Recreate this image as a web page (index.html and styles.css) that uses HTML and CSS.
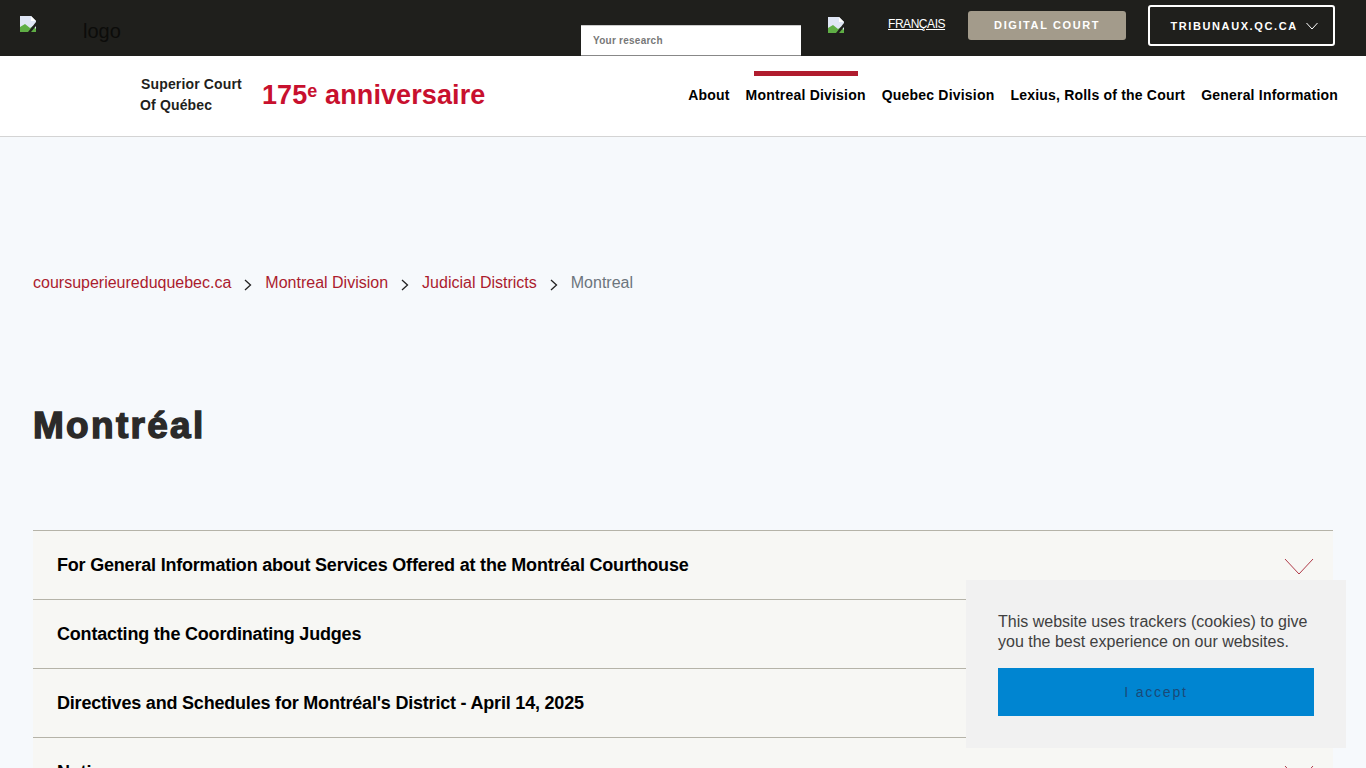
FILE: index.html
```html
<!DOCTYPE html>
<html lang="en">

<head>
    <meta charset="UTF-8">
    <meta name="viewport" content="width=device-width, initial-scale=1.0">
    <title>Montréal</title>
    <link rel="stylesheet" href="styles.css">
</head>

<body>
    <div class="top-bar">
        <div class="logo-box">
            <svg class="broken-img" width="17" height="17" viewBox="0 0 17 17">
                <path d="M0 0H11L16 5V16H0Z" fill="#dfe6f5" />
                <path d="M11 0V5H16Z" fill="#fff" />
                <path d="M0 16V11L5 8L10 12L13 10L16 13V16Z" fill="#5fae45" />
                <path d="M16 6L8 16H11L16 10Z" fill="#1f1f1c" />
            </svg>
            <span class="logo-text">logo</span>
        </div>
        <input class="search-input" type="text" placeholder="Your research">
        <svg class="broken-img search-img" width="17" height="17" viewBox="0 0 17 17">
            <path d="M0 0H11L16 5V16H0Z" fill="#dfe6f5" />
            <path d="M11 0V5H16Z" fill="#fff" />
            <path d="M0 16V11L5 8L10 12L13 10L16 13V16Z" fill="#5fae45" />
            <path d="M16 6L8 16H11L16 10Z" fill="#1f1f1c" />
        </svg>
        <a class="lang-link" href="#">FRANÇAIS</a>
        <a class="digital-btn" href="#">DIGITAL COURT</a>
        <a class="tribunaux-btn" href="#">TRIBUNAUX.QC.CA
            <svg width="12" height="8" viewBox="0 0 12 8">
                <path d="M0.5 1L6 7L11.5 1" fill="none" stroke="#fff" stroke-width="1" />
            </svg>
        </a>
    </div>

    <div class="nav-bar">
        <div class="court-name">
            <span class="court-line">Superior Court</span>
            <span class="court-line court-line-2">Of Québec</span>
        </div>
        <div class="anniversary">175<sup>e</sup> anniversaire</div>
        <ul class="main-menu">
            <li><a href="#">About</a></li>
            <li class="active"><a href="#">Montreal Division</a></li>
            <li><a href="#">Quebec Division</a></li>
            <li><a href="#">Lexius, Rolls of the Court</a></li>
            <li><a href="#">General Information</a></li>
        </ul>
    </div>

    <div class="content">
        <nav class="breadcrumb">
            <a href="#">coursuperieureduquebec.ca</a>
            <svg class="crumb-sep" width="8" height="12" viewBox="0 0 8 12"><path d="M1 1L6.5 6L1 11" fill="none" stroke="#222" stroke-width="1.3" /></svg>
            <a href="#">Montreal Division</a>
            <svg class="crumb-sep" width="8" height="12" viewBox="0 0 8 12"><path d="M1 1L6.5 6L1 11" fill="none" stroke="#222" stroke-width="1.3" /></svg>
            <a href="#">Judicial Districts</a>
            <svg class="crumb-sep" width="8" height="12" viewBox="0 0 8 12"><path d="M1 1L6.5 6L1 11" fill="none" stroke="#222" stroke-width="1.3" /></svg>
            <span class="crumb-current">Montreal</span>
        </nav>

        <h1 class="page-title">Montréal</h1>

        <div class="accordion">
            <div class="acc-row">
                <span>For General Information about Services Offered at the Montréal Courthouse</span>
                <svg class="acc-icon" width="30" height="17" viewBox="0 0 30 17"><path d="M1 1L15 16L29 1" fill="none" stroke="#b03a48" stroke-width="1" /></svg>
            </div>
            <div class="acc-row">
                <span>Contacting the Coordinating Judges</span>
                <svg class="acc-icon" width="30" height="17" viewBox="0 0 30 17"><path d="M1 1L15 16L29 1" fill="none" stroke="#b03a48" stroke-width="1" /></svg>
            </div>
            <div class="acc-row">
                <span>Directives and Schedules for Montréal's District - April 14, 2025</span>
                <svg class="acc-icon" width="30" height="17" viewBox="0 0 30 17"><path d="M1 1L15 16L29 1" fill="none" stroke="#b03a48" stroke-width="1" /></svg>
            </div>
            <div class="acc-row">
                <span>Notices</span>
                <svg class="acc-icon" width="30" height="17" viewBox="0 0 30 17"><path d="M1 1L15 16L29 1" fill="none" stroke="#b03a48" stroke-width="1" /></svg>
            </div>
        </div>
    </div>

    <div class="cookie-banner">
        <p>This website uses trackers (cookies) to give you the best experience on our websites.</p>
        <button class="cookie-btn">I accept</button>
    </div>
</body>

</html>
```

FILE: styles.css
```css
html,
body {
    margin: 0;
    height: 100%;
    overflow: hidden;
}

body {
    background-color: #f6f9fc;
    font-family: "Liberation Sans", Arial, sans-serif;
    color: #000;
}

a {
    text-decoration: none;
}

/* top dark bar */
.top-bar {
    display: flex;
    align-items: flex-start;
    height: 56px;
    background-color: #1f1f1c;
}

.logo-box {
    display: flex;
    width: 561px;
    padding: 16px 0 0 20px;
    box-sizing: content-box;
}

.broken-img {
    flex: none;
}

.logo-text {
    margin: 4px 0 0 46px;
    font-size: 20px;
    color: #0c0c0a;
}

.search-input {
    width: 220px;
    height: 31px;
    margin-top: 25px;
    padding: 0 12px;
    box-sizing: border-box;
    border: 0;
    border-top: 1px solid #ccc;
    border-bottom: 1px solid #888;
    border-radius: 0;
    background-color: #fff;
    font-family: "Liberation Sans", Arial, sans-serif;
    font-size: 10px;
    font-weight: bold;
    letter-spacing: 0.25px;
}

.search-input::placeholder {
    color: #777;
}

.search-img {
    margin: 17px 0 0 27px;
}

.lang-link {
    margin: 17px 0 0 43px;
    color: #fff;
    font-size: 12px;
    letter-spacing: -0.45px;
    text-decoration: underline;
}

.digital-btn {
    width: 158px;
    height: 29px;
    margin: 11px 0 0 23px;
    background-color: #a39b8b;
    border-radius: 3px;
    color: #fff;
    font-size: 11px;
    font-weight: bold;
    letter-spacing: 1.6px;
    line-height: 29px;
    text-align: center;
}

.tribunaux-btn {
    display: flex;
    align-items: center;
    justify-content: center;
    gap: 8px;
    width: 187px;
    height: 41px;
    margin: 5px 0 0 22px;
    padding-left: 5px;
    box-sizing: border-box;
    border: 2px solid #fff;
    border-radius: 3px;
    color: #fff;
    font-size: 11px;
    font-weight: bold;
    letter-spacing: 1.6px;
}

/* white nav */
.nav-bar {
    display: flex;
    align-items: center;
    height: 80px;
    box-sizing: content-box;
    padding-right: 28px;
    background-color: #fff;
    border-bottom: 1px solid #d4d4d4;
}

.court-name {
    display: flex;
    flex-direction: column;
    width: 121px;
    margin: -2px 0 0 141px;
    font-size: 14px;
    font-weight: bold;
    letter-spacing: 0.15px;
    line-height: 21px;
    color: #1f1f1c;
}

.court-line-2 {
    margin-left: -1px;
}

.anniversary {
    font-size: 27px;
    font-weight: bold;
    letter-spacing: 0.1px;
    color: #c8102e;
    margin-top: -1px;
}

.anniversary sup {
    font-size: 18px;
    line-height: 0;
    vertical-align: 7px;
}

.main-menu {
    display: flex;
    gap: 16px;
    margin: 0 0 2px auto;
    padding: 0;
    list-style: none;
}

.main-menu li {
    position: relative;
}

.main-menu a {
    color: #000;
    font-size: 14px;
    font-weight: bold;
    letter-spacing: 0.2px;
}

.main-menu .active::before {
    content: "";
    position: absolute;
    top: -15px;
    left: 8px;
    right: 8px;
    height: 5px;
    background-color: #b01c2e;
}

/* content */
.content {
    padding: 0 33px;
}

.breadcrumb {
    display: flex;
    align-items: center;
    gap: 13px;
    margin-top: 136px;
    font-size: 16px;
    line-height: 20px;
}

.breadcrumb a {
    color: #ab1c2e;
}

.crumb-sep {
    margin-top: 3px;
}

.crumb-current {
    color: #6c757d;
}

.page-title {
    margin: 110px 0 0;
    font-size: 37px;
    line-height: 46px;
    letter-spacing: 2.3px;
    color: #2b2a29;
    -webkit-text-stroke: 1.4px #2b2a29;
}

.accordion {
    margin-top: 81px;
    border-top: 1px solid #b5b3a8;
}

.acc-row {
    display: flex;
    align-items: center;
    justify-content: space-between;
    height: 68px;
    padding: 0 19px 0 24px;
    background-color: #f7f7f4;
    border-bottom: 1px solid #b5b3a8;
    font-size: 18px;
    font-weight: bold;
    letter-spacing: -0.2px;
}

.acc-icon {
    margin-top: 3px;
}

/* cookie banner, fixed over the page */
.cookie-banner {
    position: fixed;
    right: 20px;
    bottom: 20px;
    width: 380px;
    height: 168px;
    padding: 32px;
    box-sizing: border-box;
    background-color: #f1f1f1;
}

.cookie-banner p {
    margin: 0 0 16px;
    font-size: 16px;
    line-height: 20px;
    color: #404040;
}

.cookie-btn {
    display: block;
    width: 100%;
    height: 48px;
    border: 0;
    background-color: #0085d1;
    color: #1a4a78;
    font-family: "Liberation Sans", Arial, sans-serif;
    font-size: 14px;
    letter-spacing: 1.8px;
}
```
